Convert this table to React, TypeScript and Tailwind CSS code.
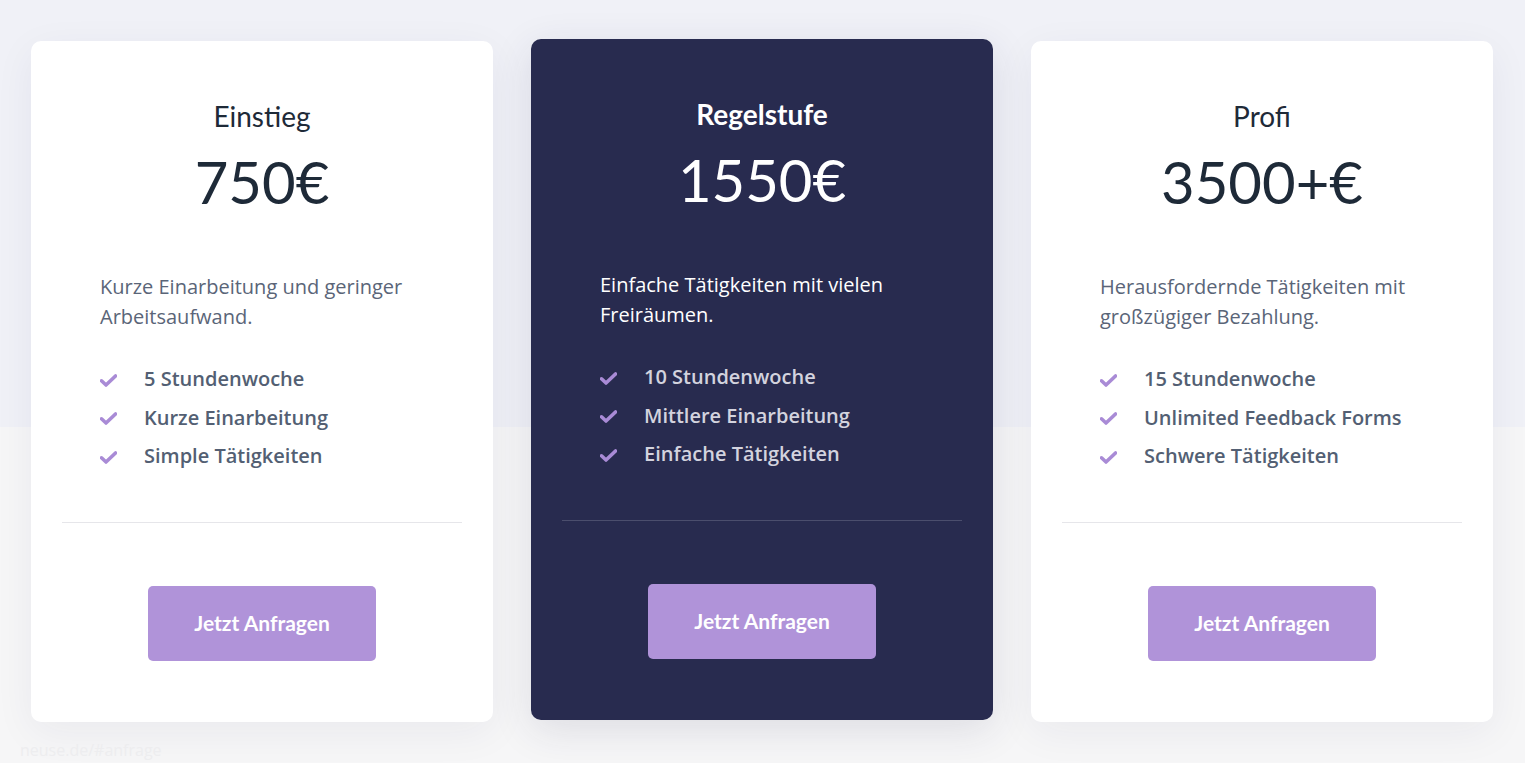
import React from "react";

const heading = { fontFamily: "Lato, 'Noto Sans', sans-serif" };
const body = { fontFamily: "'Open Sans', 'Noto Sans', sans-serif" };

function Check() {
  return (
    <svg width="17" height="13" viewBox="0 0 17 13" className="shrink-0">
      <path d="M1.5 6.8 L6 11 L15.5 2" fill="none" stroke="#a98bd6" strokeWidth="3.6" strokeLinecap="round" strokeLinejoin="round" />
    </svg>
  );
}

type Plan = { title: string; price: string; desc: string[]; items: string[]; dark?: boolean };

const plans: Plan[] = [
  { title: "Einstieg", price: "750€", desc: ["Kurze Einarbeitung und geringer", "Arbeitsaufwand."], items: ["5 Stundenwoche", "Kurze Einarbeitung", "Simple Tätigkeiten"] },
  { title: "Regelstufe", price: "1550€", desc: ["Einfache Tätigkeiten mit vielen", "Freiräumen."], items: ["10 Stundenwoche", "Mittlere Einarbeitung", "Einfache Tätigkeiten"], dark: true },
  { title: "Profi", price: "3500+€", desc: ["Herausfordernde Tätigkeiten mit", "großzügiger Bezahlung."], items: ["15 Stundenwoche", "Unlimited Feedback Forms", "Schwere Tätigkeiten"] },
];

function Card({ p }: { p: Plan }) {
  const d = p.dark;
  return (
    <div
      className={`w-[462px] h-[681px] rounded-[10px] flex flex-col items-stretch pt-[52px] px-[31px] ${
        d ? "bg-[#282b4f] -translate-y-[2px] shadow-[0_10px_40px_rgba(40,43,79,0.12)]" : "bg-white shadow-[0_10px_40px_rgba(30,40,80,0.06)]"
      }`}
    >
      <div style={heading} className={`text-center text-[28px] leading-[46px] ${d ? "text-white font-bold" : "text-[#1e2a38] font-normal"}`}>
        {p.title}
      </div>
      <div style={heading} className={`text-center text-[58px] leading-[68px] mt-[9px] ${d ? "text-white" : "text-[#1e2a38]"}`}>
        {p.price}
      </div>
      <div style={body} className={`px-[38px] mt-[56px] text-[20px] leading-[30px] ${d ? "text-white" : "text-[#5a6578]"}`}>
        {p.desc.map((l) => (
          <div key={l}>{l}</div>
        ))}
      </div>
      <div className="px-[38px] mt-[28px] flex flex-col">
        {p.items.map((it) => (
          <div key={it} className="flex items-center h-[38.5px]">
            <div className="w-[44px] flex items-center pt-[2px]">
              <Check />
            </div>
            <span style={body} className={`text-[20px] font-semibold ${d ? "text-[#d3d3de]" : "text-[#535f73]"}`}>
              {it}
            </span>
          </div>
        ))}
      </div>
      <div className={`mt-[46px] h-px ${d ? "bg-[#4b4e6d]" : "bg-[#e6e6ea]"}`} />
      <div className="flex justify-center mt-[63px]">
        <button
          style={heading}
          className="w-[228px] h-[75px] rounded-[5px] bg-[#b093d9] text-white text-[21px] font-bold"
        >
          Jetzt Anfragen
        </button>
      </div>
    </div>
  );
}

export default function App() {
  return (
    <div className="relative w-[1525px] h-[763px] overflow-hidden bg-[#f6f6f7]">
      <div className="absolute inset-x-0 top-0 h-[427px] bg-[#f0f1f7]" />
      <div className="relative flex gap-[38px] pl-[31px] pt-[41px]">
        {plans.map((p) => (
          <Card key={p.title} p={p} />
        ))}
      </div>
      <div style={body} className="absolute left-[20px] top-[740px] text-[16px] leading-[20px] text-[#ededef]">
        neuse.de/#anfrage
      </div>
    </div>
  );
}
